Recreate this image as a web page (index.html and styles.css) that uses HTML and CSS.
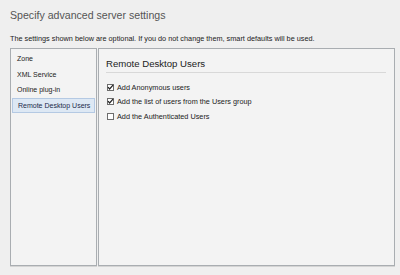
FILE: index.html
```html
<!DOCTYPE html>
<html lang="en">
<head>
  <meta charset="UTF-8" />
  <title>Specify advanced server settings</title>
  <link rel="stylesheet" href="styles.css">
</head>
<body>
  <div class="wizard">
    <h1>Specify advanced server settings</h1>
    <p class="intro">The settings shown below are optional. If you do not change them, smart defaults will be used.</p>

    <div class="panes">
      <ul class="nav">
        <li>Zone</li>
        <li>XML Service</li>
        <li>Online plug-in</li>
        <li class="selected">Remote Desktop Users</li>
      </ul>

      <div class="page">
        <h2>Remote Desktop Users</h2>
        <div class="check">
          <span class="box"><svg viewBox="0 0 7 7" width="7" height="7"><path d="M1 3.2 L2.6 5 L6 1.2" fill="none" stroke="#222" stroke-width="1.2"/></svg></span>
          Add Anonymous users
        </div>
        <div class="check">
          <span class="box"><svg viewBox="0 0 7 7" width="7" height="7"><path d="M1 3.2 L2.6 5 L6 1.2" fill="none" stroke="#222" stroke-width="1.2"/></svg></span>
          Add the list of users from the Users group
        </div>
        <div class="check">
          <span class="box"></span>
          Add the Authenticated Users
        </div>
      </div>
    </div>
  </div>
</body>
</html>
```

FILE: styles.css
```css
:root {
  --bg: #efefef;
  --pane-bg: #f3f3f3;
  --pane-border: #a9adb1;
  --text: #222;
  --title: #555;
}
html, body {
  margin: 0;
  height: 100%;
}
body {
  background: var(--bg);
  font-family: 'Liberation Sans', Arial, sans-serif;
  color: var(--text);
}
.wizard {
  display: flex;
  flex-direction: column;
  height: 275px;
  padding: 0 5px 9px 10px;
  box-sizing: border-box;
}
h1 {
  margin: 7px 0 0;
  font-size: 10.6px;
  font-weight: normal;
  color: var(--title);
  line-height: 16px;
}
.intro {
  margin: 11px 0 5px;
  font-size: 7.3px;
  line-height: 9px;
}
.panes {
  flex: 1;
  display: flex;
  gap: 1px;
}
.nav, .page {
  background: var(--pane-bg);
  border: 1px solid var(--pane-border);
  box-shadow: 0 1px 0 #d4d4d4;
}
.nav {
  width: 85px;
  margin: 0;
  padding: 2px 0 0;
  list-style: none;
  font-size: 7px;
}
.nav li {
  height: 15.5px;
  line-height: 15.5px;
  padding-left: 6px;
  white-space: nowrap;
}
.nav li.selected {
  background: #dde8f4;
  border: 1px solid #b4c9e3;
  color: #1c2a4a;
  margin: 0 1px;
  padding-left: 5px;
  line-height: 13px;
  height: 13px;
}
.page {
  flex: 1;
  padding: 9px 8px 0 7px;
}
h2 {
  margin: 0 0 7px;
  font-size: 9.6px;
  font-weight: normal;
  line-height: 12px;
  padding-bottom: 2px;
  border-bottom: 1px solid #d8d8d8;
}
.check {
  display: flex;
  align-items: center;
  gap: 3px;
  height: 14.5px;
  font-size: 7.3px;
  white-space: nowrap;
}
.box {
  width: 5px;
  height: 5px;
  margin-left: 1px;
  border: 1px solid #6d6d6d;
  background: #fff;
  position: relative;
}
.box svg {
  position: absolute;
  left: -1px;
  top: -1px;
}
```
